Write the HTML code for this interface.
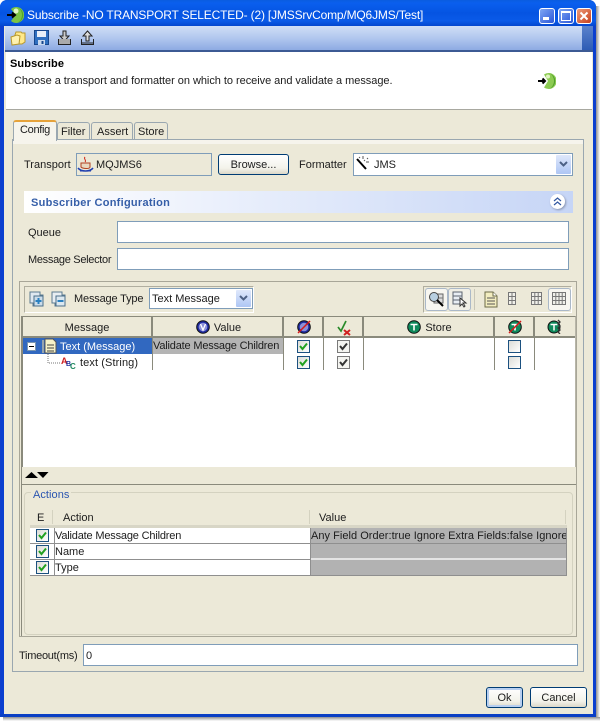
<!DOCTYPE html>
<html><head><meta charset="utf-8"><style>
html,body{margin:0;padding:0;background:#fff;width:600px;height:721px;overflow:hidden}
*{box-sizing:border-box}
#w{position:relative;width:600px;height:721px;font:11px "Liberation Sans",sans-serif;color:#1c1c1c;overflow:hidden}
#w div,#w span.a,#w svg{position:absolute}
.t{white-space:nowrap;line-height:14px;height:14px;transform:translateY(1px)}
.in{background:#fff;border:1px solid #7f9db9}
.btn{background:linear-gradient(#fff,#f3f2ea 70%,#dcd8c8);border:1px solid #003c74;border-radius:3px;text-align:center;line-height:21px}
.dd{background:linear-gradient(#dfe8fb,#aec6f4);border-radius:1px}
.hd{background:#ece9d8;border-right:2px solid #8a8a7c;border-bottom:2px solid #8a8a7c;text-align:center;line-height:23px}
.cb{width:13px;height:13px;border:1px solid #1c5180;background:linear-gradient(135deg,#dcdcd7,#fff)}
.cg{width:13px;height:13px;border:1px solid #7a7a7a;background:#f4f4f0}
</style></head><body><div id="w">
<!-- window frame -->
<div style="left:0;top:0;width:596px;height:717px;background:#0f3fcc;border-radius:7px 7px 0 0"></div>
<div style="left:596px;top:6px;width:4px;height:713px;background:linear-gradient(90deg,#8f8f8f,#fff)"></div>
<div style="left:3px;top:717px;width:597px;height:4px;background:linear-gradient(#8f8f8f,#fff)"></div>
<div style="left:0;top:0;width:596px;height:26px;border-radius:7px 7px 0 0;background:linear-gradient(#0a5ce0,#0a5fee 12%,#0554e2 50%,#0a5ae8 80%,#0346cf)"></div>
<div style="left:4px;top:26px;width:589px;height:688px;background:#ece9d8"></div>
<div style="left:1px;top:26px;width:3px;height:689px;background:#0a3fd0"></div>
<div style="left:593px;top:26px;width:2px;height:689px;background:#0a3fd0"></div>
<div style="left:0;top:714px;width:596px;height:3px;background:#0a3fc4"></div>
<!-- title icon -->
<svg style="left:6px;top:6px" width="18" height="18" viewBox="0 0 18 18"><path d="M9.500 9L5 3a8 8 0 1 1 0 12z" fill="#7cc444"/><path d="M12 1.500a8 8 0 0 1 0 15a9 9 0 0 0 0-15z" fill="#4fa62c"/><circle cx="10" cy="5" r="2.500" fill="#e2f6c4"/><path d="M1 9h8M6 6.500 9 9l-3 2.500" stroke="#000" stroke-width="2" fill="none"/></svg>
<div class="t" style="left:27px;top:7px;color:#fff;font-size:12px;letter-spacing:-.17px">Subscribe -NO TRANSPORT SELECTED- (2) [JMSSrvComp/MQ6JMS/Test]</div>
<!-- window buttons -->
<div style="left:539px;top:8px;width:16px;height:16px;border:1px solid #fff;border-radius:3px;background:linear-gradient(135deg,#7fa6f4,#2a56d8)"></div>
<div style="left:543px;top:17px;width:6px;height:3px;background:#fff"></div>
<div style="left:558px;top:8px;width:16px;height:16px;border:1px solid #fff;border-radius:3px;background:linear-gradient(135deg,#7fa6f4,#2a56d8)"></div>
<div style="left:561px;top:11px;width:10px;height:10px;border:1px solid #fff;border-top-width:2px"></div>
<div style="left:576px;top:8px;width:16px;height:16px;border:1px solid #fff;border-radius:3px;background:linear-gradient(135deg,#ec9a78,#c8401c)"></div>
<svg style="left:576px;top:8px" width="16" height="16"><path d="M4.500 4.500l7 7M11.500 4.500l-7 7" stroke="#fff" stroke-width="2"/></svg>
<!-- toolbar -->
<div style="left:5px;top:26px;width:588px;height:25px;background:linear-gradient(#d0def6,#b0c6ee 50%,#8aa8e2)"></div>
<div style="left:582px;top:26px;width:11px;height:25px;background:linear-gradient(#5a82cc,#2c5ab4)"></div>
<div style="left:5px;top:50px;width:588px;height:2px;background:#3c5a94"></div>
<svg style="left:10px;top:30px" width="16" height="16" viewBox="0 0 16 16"><path d="M6 2h5l1 1h3v9l-3 2H2z" fill="#ffe98a" stroke="#b8982c"/><path d="M1 7l6-2 3 1-1 8-7 1z" fill="#fff2b0" stroke="#b8982c"/></svg>
<svg style="left:34px;top:30px" width="15" height="15" viewBox="0 0 15 15"><path d="M.5.500h14v14H.5z" fill="#2f6fc0" stroke="#17468c"/><path d="M3 1h9v6H3z" fill="#e8eef8"/><path d="M4 10h7v5H4z" fill="#c8d8ee"/><path d="M8.500 11v3" stroke="#17468c" stroke-width="2"/></svg>
<svg style="left:57px;top:30px" width="15" height="16" viewBox="0 0 15 16"><path d="M6 1h3v5h3L7.500 11 3 6h3z" fill="#ccc" stroke="#222"/><path d="M1.500 9v5.500h12V9" fill="#aaa" stroke="#222"/></svg>
<svg style="left:80px;top:30px" width="15" height="16" viewBox="0 0 15 16"><path d="M7.500 1L12 6H9v5H6V6H3z" fill="#ddd" stroke="#222"/><path d="M1.500 9v5.500h12V9" fill="none" stroke="#222"/><path d="M2 13h11" stroke="#222"/></svg>
<!-- header -->
<div style="left:6px;top:52px;width:586px;height:58px;background:#fff;border-bottom:1px solid #a8a8a0"></div>
<div class="t" style="left:10px;top:56px;font-weight:bold;color:#000;letter-spacing:.1px">Subscribe</div>
<div class="t" style="left:14px;top:73px;letter-spacing:-.04px">Choose a transport and formatter on which to receive and validate a message.</div>
<svg style="left:538px;top:72px" width="18" height="18" viewBox="0 0 18 18"><path d="M10 9L6 2.500a8 8 0 1 1 0 13z" fill="#8ccb52"/><path d="M12 1.500a8 8 0 0 1 0 15a9 9 0 0 0 0-15z" fill="#4f9e2c"/><circle cx="10" cy="4.500" r="2" fill="#dff4c0"/><path d="M0 9h7M4.500 6.500 7 9l-2.500 2.500" stroke="#000" stroke-width="2" fill="none"/></svg>
<!-- tabs -->
<div style="left:12px;top:139px;width:572px;height:533px;background:#ece9d8;border:1px solid #9aa7b0"></div>
<div style="left:13px;top:140px;width:570px;height:4px;background:#f6f4ec"></div>
<div style="left:13px;top:120px;width:44px;height:21px;background:#f6f4ec;border:1px solid #9aa7b0;border-bottom:none;border-radius:3px 3px 0 0;border-top:2px solid #e6a23a"></div>
<div class="t" style="left:20px;top:122px;letter-spacing:-.3px">Config</div>
<div style="left:57px;top:122px;width:33px;height:18px;background:#ece9d8;border:1px solid #9aa7b0;border-radius:3px 3px 0 0"></div>
<div class="t" style="left:61px;top:124px">Filter</div>
<div style="left:91px;top:122px;width:42px;height:18px;background:#ece9d8;border:1px solid #9aa7b0;border-radius:3px 3px 0 0"></div>
<div class="t" style="left:97px;top:124px">Assert</div>
<div style="left:134px;top:122px;width:34px;height:18px;background:#ece9d8;border:1px solid #9aa7b0;border-radius:3px 3px 0 0"></div>
<div class="t" style="left:138px;top:124px">Store</div>
<!-- transport -->
<div class="t" style="left:24px;top:157px">Transport</div>
<div style="left:76px;top:153px;width:136px;height:23px;background:#ece9d8;border:1px solid #7f9db9"></div>
<svg style="left:77px;top:156px" width="17" height="17" viewBox="0 0 17 17"><path d="M8 1c-2 2 2 3 0 5" stroke="#d03020" fill="none"/><path d="M4 7h9v4c0 2-7 2-9 0z" fill="#e8d8c0" stroke="#b04020"/><path d="M1 12c3 4 12 4 15 0" stroke="#2040b0" fill="none" stroke-width="1.500"/><path d="M3 15h11" stroke="#2040b0"/></svg>
<div class="t" style="left:96px;top:157px">MQJMS6</div>
<div class="btn" style="left:218px;top:154px;width:71px;height:21px">Browse...</div>
<div class="t" style="left:299px;top:157px">Formatter</div>
<div class="in" style="left:353px;top:153px;width:220px;height:23px"></div>
<svg style="left:356px;top:156px" width="14" height="14" viewBox="0 0 14 14"><path d="M1 3l9 10" stroke="#000" stroke-width="2"/><path d="M3 1l1 1M7 0v3M11 3l1-1M10 6h3M8 4l1 1" stroke="#555"/></svg>
<div class="t" style="left:374px;top:157px">JMS</div>
<div class="dd" style="left:556px;top:155px;width:15px;height:19px"></div>
<svg style="left:559px;top:161px" width="9" height="7"><path d="M1 1l3.500 3.500L8 1" stroke="#4d6185" stroke-width="2" fill="none"/></svg>
<!-- section -->
<div style="left:24px;top:191px;width:549px;height:22px;background:linear-gradient(90deg,#fff,#c6d5f6)"></div>
<div class="t" style="left:31px;top:195px;font-weight:bold;color:#355ea8;letter-spacing:.27px">Subscriber Configuration</div>
<div style="left:550px;top:194px;width:15px;height:15px;border-radius:8px;background:#fff;box-shadow:1px 1px 2px #8894b0"></div>
<svg style="left:553px;top:197px" width="9" height="9"><path d="M1 4l3.500-3L8 4M1 8l3.500-3L8 8" stroke="#2f55a0" stroke-width="1.200" fill="none"/></svg>
<div class="t" style="left:28px;top:225px">Queue</div>
<div class="in" style="left:117px;top:221px;width:452px;height:22px"></div>
<div class="t" style="left:28px;top:252px;letter-spacing:-.3px">Message Selector</div>
<div class="in" style="left:117px;top:248px;width:452px;height:22px"></div>
<!-- inner group -->
<div style="left:19px;top:281px;width:558px;height:356px;border:1px solid #a8a698"></div>
<div style="left:24px;top:286px;width:230px;height:27px;background:#ece9d8;border:1px solid #b0ae9f;border-right-color:#fff;border-bottom-color:#fff"></div>
<svg style="left:29px;top:291px" width="17" height="17" viewBox="0 0 17 17"><path d="M1 1h10v3h3v11H4v-3H1z" fill="#dfe8f0" stroke="#5b7a90"/><path d="M5 5h9v10H5z" fill="#cbdcea" stroke="#4b6f8a"/><path d="M9.500 7v6M6.500 10h6" stroke="#2a80c0" stroke-width="2"/></svg>
<svg style="left:51px;top:291px" width="17" height="17" viewBox="0 0 17 17"><path d="M1 1h10v3h3v11H4v-3H1z" fill="#e8eef2" stroke="#5b7a90"/><path d="M5 5h9v10H5z" fill="#dce8f0" stroke="#4b6f8a"/><path d="M6.500 10h6" stroke="#2a80c0" stroke-width="2"/></svg>
<div class="t" style="left:74px;top:291px;letter-spacing:-.17px">Message Type</div>
<div class="in" style="left:149px;top:288px;width:104px;height:21px;border-color:#7f9db9"></div>
<div class="t" style="left:152px;top:291px">Text Message</div>
<div class="dd" style="left:236px;top:290px;width:15px;height:17px"></div>
<svg style="left:239px;top:295px" width="9" height="7"><path d="M1 1l3.500 3.500L8 1" stroke="#4d6185" stroke-width="2" fill="none"/></svg>
<!-- right toolbar -->
<div style="left:423px;top:286px;width:149px;height:27px;background:#ece9d8;border:1px solid #b0ae9f;border-right-color:#fff;border-bottom-color:#fff"></div>
<div style="left:425px;top:288px;width:23px;height:23px;background:#f7f6f0;border:1px solid #aab8c8;border-radius:3px"></div>
<div style="left:448px;top:288px;width:23px;height:23px;background:#f0efe6;border:1px solid #aab8c8;border-radius:3px"></div>
<div style="left:548px;top:288px;width:23px;height:23px;background:#f7f6f0;border:1px solid #aab8c8;border-radius:3px"></div>
<div style="left:474px;top:289px;width:1px;height:21px;background:#c8c6b8"></div>
<svg style="left:428px;top:291px" width="17" height="17" viewBox="0 0 17 17"><path d="M6 3h9v9H6z" fill="#ddd" stroke="#666"/><path d="M6 7h9M10 3v9" stroke="#777"/><circle cx="6" cy="6" r="4.500" fill="#b8cfe0" stroke="#444"/><path d="M9 9l6 6" stroke="#000" stroke-width="2"/></svg>
<svg style="left:451px;top:291px" width="18" height="17" viewBox="0 0 18 17"><path d="M2 1h9v12H2z" fill="#e8eef4" stroke="#5c6470"/><path d="M2 5h9M2 9h9" stroke="#5c6470"/><path d="M9 7v8l2-2 2 3 1-1-2-3h3z" fill="#fff" stroke="#333"/></svg>
<svg style="left:484px;top:291px" width="14" height="17" viewBox="0 0 14 17"><path d="M1 1h8l4 4v11H1z" fill="#f2edc0" stroke="#6c6c48"/><path d="M3 7h8M3 10h8M3 13h8" stroke="#555"/><path d="M9 1v4h4" fill="#fff" stroke="#6c6c48"/></svg>
<svg style="left:508px;top:292px" width="9" height="14"><path d="M.5.500h7v12h-7zM4 .500v12M.5 4.500h7M.5 8.500h7" fill="#f0f0ea" stroke="#777"/></svg>
<svg style="left:531px;top:292px" width="11" height="14"><path d="M.5.500h10v12H.5zM3.800.500v12M7.200.500v12M.5 4.500h10M.5 8.500h10" fill="#f0f0ea" stroke="#777"/></svg>
<svg style="left:552px;top:292px" width="14" height="14"><path d="M.5.500h13v12H.5zM3.800.500v12M7 .500v12M10.200.500v12M.5 4.500h13M.5 8.500h13" fill="#f0f0ea" stroke="#777"/></svg>
<!-- table -->
<div style="left:21px;top:316px;width:555px;height:151px;background:#fff;border-left:2px solid #8a8a7c;border-right:1px solid #b8b6a8;border-top:1px solid #8a8a7c"></div>
<div class="hd" style="left:23px;top:317px;width:130px;height:21px">Message</div>
<div class="hd" style="left:153px;top:317px;width:131px;height:21px;padding-left:20px">Value</div>
<div class="hd" style="left:284px;top:317px;width:40px;height:21px"></div>
<div class="hd" style="left:324px;top:317px;width:40px;height:21px"></div>
<div class="hd" style="left:364px;top:317px;width:131px;height:21px;padding-left:20px">Store</div>
<div class="hd" style="left:495px;top:317px;width:40px;height:21px"></div>
<div class="hd" style="left:535px;top:317px;width:40px;height:21px;border-right:none"></div>
<svg style="left:196px;top:320px" width="14" height="14"><circle cx="7" cy="7" r="6.300" fill="#1e2aa0" stroke="#111"/><circle cx="7" cy="7" r="4.300" fill="#8b90d8"/><path d="M4.500 4l2.500 6 2.500-6" stroke="#fff" stroke-width="1.300" fill="none"/></svg>
<svg style="left:297px;top:320px" width="14" height="14"><circle cx="7" cy="7" r="6.300" fill="#1e2aa0" stroke="#111"/><circle cx="7" cy="7" r="4.300" fill="#8b90d8"/><path d="M1 13L13 1" stroke="#d81818" stroke-width="1.500"/></svg>
<svg style="left:337px;top:320px" width="14" height="16"><path d="M1 7l3 4 5-10" stroke="#2a8a2a" stroke-width="1.700" fill="none"/><path d="M7 10l6 5M13 10l-6 5" stroke="#d02020" stroke-width="2"/></svg>
<svg style="left:407px;top:320px" width="14" height="14"><circle cx="7" cy="7" r="6.300" fill="#0f8a5c" stroke="#111"/><path d="M3.500 4.500h7M7 4.500v6" stroke="#fff" stroke-width="1.600"/></svg>
<svg style="left:508px;top:320px" width="14" height="14"><circle cx="7" cy="7" r="6.300" fill="#0f8a5c" stroke="#111"/><path d="M3.500 4.500h7M7 4.500v6" stroke="#fff" stroke-width="1.600"/><path d="M1 13L13 1" stroke="#d81818" stroke-width="1.500"/></svg>
<svg style="left:547px;top:319px" width="15" height="15"><circle cx="7" cy="8" r="6" fill="#0f8a5c" stroke="#111"/><path d="M3.500 5.500h7M7 5.500v6" stroke="#fff" stroke-width="1.500"/><path d="M11 1l2 2-2 2 2 2-2 2 2 2-2 2 2 2" stroke="#333" stroke-width="1.300" fill="none"/></svg>
<!-- rows -->
<div style="left:23px;top:338px;width:129px;height:16px;background:#3168c0"></div>
<div style="left:153px;top:338px;width:130px;height:16px;background:#b4b4b4"></div>
<div style="left:27px;top:342px;width:9px;height:9px;background:#fff;border:1px solid #7a96b0"></div>
<div style="left:29px;top:346px;width:5px;height:1px;background:#000"></div>
<svg style="left:42px;top:338px" width="15" height="16" viewBox="0 0 15 16"><path d="M3 1h8l3 3v11H3z" fill="#f6f2c8" stroke="#555"/><path d="M1 2v13" stroke="#b8b8a8" stroke-width="1.500"/><path d="M5 7h7M5 10h7M5 13h7" stroke="#444"/></svg>
<div class="t" style="left:60px;top:339px;color:#fff">Text (Message)</div>
<div class="t" style="left:153px;top:338px;letter-spacing:-.18px">Validate Message Children</div>
<svg style="left:47px;top:354px" width="14" height="12"><path d="M1 0v9h13" stroke="#777" stroke-dasharray="1 1" fill="none"/></svg>
<svg style="left:61px;top:355px" width="16" height="15"><text x="0" y="9" font-size="9" font-weight="bold" fill="#d02020" font-family="Liberation Sans">A</text><text x="5" y="11" font-size="7" font-weight="bold" fill="#2030a0" font-family="Liberation Sans">B</text><text x="9" y="14" font-size="8" font-weight="bold" fill="#208a60" font-family="Liberation Sans">C</text></svg>
<div class="t" style="left:80px;top:355px;letter-spacing:.1px">text (String)</div>
<div style="left:152px;top:338px;width:1px;height:32px;background:#8a8a7c"></div>
<div style="left:283px;top:338px;width:1px;height:32px;background:#8a8a7c"></div>
<div style="left:323px;top:338px;width:1px;height:32px;background:#8a8a7c"></div>
<div style="left:363px;top:338px;width:1px;height:32px;background:#8a8a7c"></div>
<div style="left:494px;top:338px;width:1px;height:32px;background:#8a8a7c"></div>
<div style="left:534px;top:338px;width:1px;height:32px;background:#8a8a7c"></div>
<div class="cb" style="left:297px;top:340px"></div><div class="cb" style="left:297px;top:356px"></div>
<svg style="left:297px;top:340px" width="13" height="13"><path d="M3 6l2.500 3L10 3.500" stroke="#21a121" stroke-width="2" fill="none"/></svg>
<svg style="left:297px;top:356px" width="13" height="13"><path d="M3 6l2.500 3L10 3.500" stroke="#21a121" stroke-width="2" fill="none"/></svg>
<div class="cg" style="left:337px;top:340px"></div><div class="cg" style="left:337px;top:356px"></div>
<svg style="left:337px;top:340px" width="13" height="13"><path d="M3 6l2.500 3L10 3.500" stroke="#333" stroke-width="2" fill="none"/></svg>
<svg style="left:337px;top:356px" width="13" height="13"><path d="M3 6l2.500 3L10 3.500" stroke="#333" stroke-width="2" fill="none"/></svg>
<div class="cb" style="left:508px;top:340px"></div><div class="cb" style="left:508px;top:356px"></div>
<!-- sash -->
<svg style="left:25px;top:471px" width="24" height="8"><path d="M0 7l6.500-6L13 7zM12 1h11.500L18 7z" fill="#000"/></svg>
<div style="left:21px;top:484px;width:555px;height:1px;background:#8a8a7c"></div>
<div style="left:21px;top:467px;width:1px;height:169px;background:#8a8a7c"></div>
<div style="left:24px;top:492px;width:549px;height:143px;border:1px solid #d4d2c0;border-radius:4px"></div>
<div class="t" style="left:31px;top:487px;color:#2a55b0;background:#ece9d8;padding:0 2px 0 2px;letter-spacing:.05px">Actions</div>
<!-- actions table -->
<div class="t" style="left:37px;top:510px">E</div>
<div style="left:52px;top:510px;width:1px;height:14px;background:#d4d2c0"></div>
<div class="t" style="left:63px;top:510px">Action</div>
<div style="left:309px;top:510px;width:1px;height:14px;background:#d4d2c0"></div>
<div class="t" style="left:319px;top:510px">Value</div>
<div style="left:565px;top:510px;width:1px;height:14px;background:#d4d2c0"></div>
<div style="left:30px;top:525px;width:537px;height:3px;background:#d8d6c6"></div>
<div style="left:30px;top:528px;width:280px;height:48px;background:#fff"></div>
<div style="left:310px;top:528px;width:257px;height:48px;background:#b2b2b2"></div>
<div style="left:30px;top:543px;width:537px;height:1px;background:#8f8f8f"></div>
<div style="left:30px;top:559px;width:280px;height:1px;background:#8f8f8f"></div>
<div style="left:310px;top:558px;width:257px;height:2px;background:#e4e4e4"></div>
<div style="left:30px;top:575px;width:537px;height:1px;background:#8f8f8f"></div>
<div style="left:54px;top:528px;width:1px;height:48px;background:#8f8f8f"></div>
<div style="left:310px;top:528px;width:1px;height:48px;background:#8f8f8f"></div>
<div style="left:566px;top:528px;width:1px;height:48px;background:#8f8f8f"></div>
<div class="cb" style="left:36px;top:529px"></div><div class="cb" style="left:36px;top:545px"></div><div class="cb" style="left:36px;top:561px"></div>
<svg style="left:36px;top:529px" width="13" height="13"><path d="M3 6l2.500 3L10 3.500" stroke="#21a121" stroke-width="2" fill="none"/></svg>
<svg style="left:36px;top:545px" width="13" height="13"><path d="M3 6l2.500 3L10 3.500" stroke="#21a121" stroke-width="2" fill="none"/></svg>
<svg style="left:36px;top:561px" width="13" height="13"><path d="M3 6l2.500 3L10 3.500" stroke="#21a121" stroke-width="2" fill="none"/></svg>
<div class="t" style="left:55px;top:528px;letter-spacing:-.18px">Validate Message Children</div>
<div class="t" style="left:55px;top:544px">Name</div>
<div class="t" style="left:55px;top:560px">Type</div>
<div class="t" style="left:311px;top:528px;width:255px;overflow:hidden;letter-spacing:.03px">Any Field Order:true Ignore Extra Fields:false Ignore</div>
<!-- timeout -->
<div class="t" style="left:19px;top:648px;letter-spacing:-.27px">Timeout(ms)</div>
<div class="in" style="left:83px;top:644px;width:495px;height:22px"></div>
<div class="t" style="left:86px;top:648px">0</div>
<!-- buttons -->
<div class="btn" style="left:486px;top:687px;width:37px;height:21px;box-shadow:inset 0 0 0 2px #b8cff0">Ok</div>
<div class="btn" style="left:530px;top:687px;width:57px;height:21px">Cancel</div>
</div></body></html>
